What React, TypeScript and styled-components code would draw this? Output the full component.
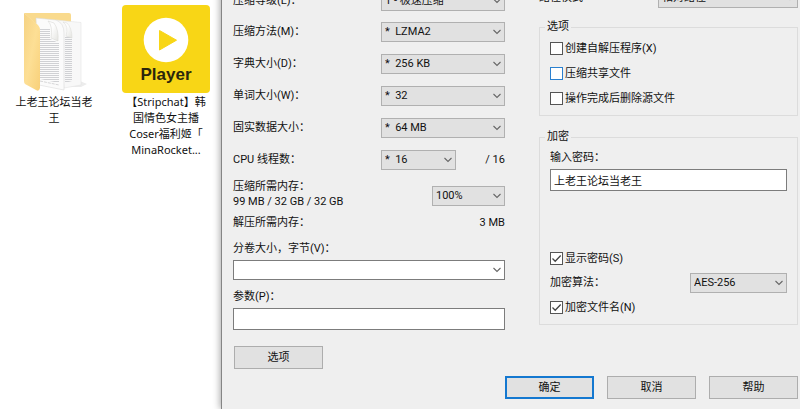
import React, { useId, useState } from "react";
import styled, { createGlobalStyle, css } from "styled-components";

const GlobalStyle = createGlobalStyle`
  *, *::before, *::after { box-sizing: border-box; }
  body {
    margin: 0;
    background: #fff;
    color: #111;
    font: 11px/16px Roboto, "Noto Sans CJK SC", sans-serif;
  }
  button, input, select { font: inherit; color: inherit; margin: 0; }
`;

const Screen = styled.div`
  display: flex;
  height: 100vh;
  overflow: hidden;
`;

const Desktop = styled.main`
  flex: none;
  display: flex;
  align-items: flex-start;
  gap: 24px;
  padding: 5px 11px 0 10px;
`;

const DesktopItem = styled.figure`
  width: 88px;
  margin: 0;
`;

const Caption = styled.figcaption`
  padding-top: 1px;
  font-family: "Noto Sans", "Noto Sans CJK SC", sans-serif;
  text-align: center;
  white-space: nowrap;
`;

const FolderArt = styled.svg`
  display: block;
  width: 88px;
  height: 88px;
`;

const PlayerTile = styled.div`
  display: flex;
  flex-direction: column;
  align-items: center;
  gap: 2px;
  height: 88px;
  padding-top: 12px;
  border-radius: 4px;
  background: #f8d616;
  color: #2b260c;
  font: bold 17px/20px "Liberation Sans", sans-serif;
`;

const Dialog = styled.form`
  flex: 1;
  align-self: flex-start;
  min-width: 0;
  min-height: calc(100vh + 14px);
  margin-top: -14px;
  padding: 0 2px 10px 11px;
  border-left: 1px solid #858585;
  background: #efefef;
  box-shadow: -1px 0 7px rgba(0, 0, 0, 0.35);
`;

const Columns = styled.div`
  display: grid;
  grid-template-columns: 21fr 20fr;
  gap: 34px;
`;

const Column = styled.div`
  display: flex;
  flex-direction: column;
  min-width: 0;
`;

const Row = styled.div<{ $height: number }>`
  display: flex;
  align-items: center;
  justify-content: space-between;
  height: ${(p) => p.$height}px;
`;

const ThreadControls = styled.div`
  display: flex;
  align-items: center;
  justify-content: space-between;
  width: 124px;
`;

const MemoryRow = styled.div`
  display: flex;
  align-items: flex-end;
  justify-content: space-between;
  padding: 3px 0 6px;
  line-height: 15px;
`;

const MemoryText = styled.div`
  display: flex;
  flex-direction: column;
`;

const MemoryControl = styled.div`
  padding-bottom: 3px;
`;

const ValueRow = styled.div`
  display: flex;
  justify-content: space-between;
`;

const BlockField = styled.div<{ $top: number }>`
  display: flex;
  flex-direction: column;
  gap: 3px;
  margin-top: ${(p) => p.$top}px;
`;

const SelectBox = styled.span<{ $width?: number }>`
  display: grid;
  align-items: center;
  width: ${(p) => (p.$width ? `${p.$width}px` : "100%")};
`;

const NativeSelect = styled.select<{ $plain?: boolean }>`
  grid-area: 1 / 1;
  appearance: none;
  width: 100%;
  height: 20px;
  padding: 0 18px 0 3px;
  border: 1px solid ${(p) => (p.$plain ? "#7c7c7c" : "#b0b0b0")};
  border-radius: 0;
  background: ${(p) => (p.$plain ? "#fff" : "#e1e1e1")};
  line-height: 16px;
`;

const Chevron = styled.svg`
  grid-area: 1 / 1;
  justify-self: end;
  width: 8px;
  height: 6px;
  margin-right: 4px;
  fill: none;
  stroke: #666;
  pointer-events: none;
`;

const TextBox = styled.input`
  width: 100%;
  height: 22px;
  padding: 0 3px;
  border: 1px solid #7c7c7c;
  border-radius: 0;
  background: #fff;
`;

const Group = styled.fieldset<{ $top: number }>`
  min-width: 0;
  margin: ${(p) => p.$top}px 0 0;
  padding: 1px 10px 4px;
  border: 1px solid #dcdcdc;
`;

const Legend = styled.legend`
  margin-left: -5px;
  padding: 0 2px;
`;

const CheckLabel = styled.label`
  display: flex;
  align-items: center;
  gap: 2px;
  height: 25px;
`;

const CheckBoxFrame = styled.span`
  display: grid;
  place-items: center;
`;

const NativeCheck = styled.input<{ $hot?: boolean }>`
  grid-area: 1 / 1;
  appearance: none;
  width: 13px;
  height: 13px;
  border: 1px solid ${(p) => (p.$hot ? "#2a80cf" : "#555")};
  background: #fff;
`;

const Tick = styled.svg`
  grid-area: 1 / 1;
  width: 11px;
  height: 11px;
  fill: none;
  stroke: #444;
  pointer-events: none;
`;

const EncryptionOptions = styled.div`
  margin-top: 55px;
`;

const PushButton = styled.button<{ $primary?: boolean }>`
  width: 89px;
  height: 23px;
  padding: 0;
  border: 1px solid #adadad;
  border-radius: 0;
  background: #e1e1e1;
  ${(p) =>
    p.$primary &&
    css`
      border: 2px solid #1478d0;
    `}
`;

const OptionsButton = styled(PushButton)`
  margin: 16px 0 0 1px;
`;

const Footer = styled.footer`
  display: flex;
  justify-content: flex-end;
  gap: 13px;
  padding-top: 7px;
`;

type DropDownProps = { id: string; value: string; width?: number; plain?: boolean };

function DropDown({ id, value, width, plain }: DropDownProps) {
  return (
    <SelectBox $width={width}>
      <NativeSelect id={id} $plain={plain} defaultValue={value}>
        <option value={value}>{value}</option>
      </NativeSelect>
      <Chevron viewBox="0 0 8 6" aria-hidden="true">
        <path d="M0.5 1 4 4.5 7.5 1" strokeWidth="1.1" />
      </Chevron>
    </SelectBox>
  );
}

type FieldProps = { label: string; value: string; width: number; height?: number };

function Field({ label, value, width, height = 32 }: FieldProps) {
  const id = useId();
  return (
    <Row $height={height}>
      <label htmlFor={id}>{label}</label>
      <DropDown id={id} value={value} width={width} />
    </Row>
  );
}

function CheckField({ label, initial = false, hot }: { label: string; initial?: boolean; hot?: boolean }) {
  const [on, setOn] = useState(initial);
  return (
    <CheckLabel>
      <CheckBoxFrame>
        <NativeCheck type="checkbox" $hot={hot} checked={on} onChange={(e) => setOn(e.target.checked)} />
        {on && (
          <Tick viewBox="0 0 11 11" aria-hidden="true">
            <path d="M1.5 5.5 4.2 8.2 9.7 2.5" strokeWidth="1.3" />
          </Tick>
        )}
      </CheckBoxFrame>
      {label}
    </CheckLabel>
  );
}

function Folder() {
  return (
    <FolderArt viewBox="0 0 88 88" aria-hidden="true">
      <defs>
        <linearGradient id="cover" x1="0" y1="0" x2="1" y2="1">
          <stop offset="0" stopColor="#f5d283" />
          <stop offset="0.5" stopColor="#fddf95" />
          <stop offset="1" stopColor="#f8d079" />
        </linearGradient>
        <linearGradient id="curl" x1="0" y1="0" x2="1" y2="1">
          <stop offset="0.4" stopColor="#fdfdfd" />
          <stop offset="1" stopColor="#e4e4e0" />
        </linearGradient>
        <pattern id="lines" width="24" height="2" patternUnits="userSpaceOnUse">
          <path d="M0 0.5H24" stroke="#d0d1d4" strokeWidth="1" />
        </pattern>
      </defs>
      <path d="M70 76 77 79 71 82H55Z" fill="#ececec" />
      <path d="M14 8H59Q61 8 61 10V18H25Z" fill="#f9da8d" />
      <path d="M46 15 71 17.5V80L54 83Z" fill="#f8f8f8" stroke="#e4e4e4" strokeWidth="0.6" />
      <path d="M55 31H62V76L55 78Z" fill="url(#lines)" />
      <path d="M53 17Q59 21 56 31L62 33Q62 23 57 18Z" fill="url(#curl)" stroke="#dadad6" strokeWidth="0.5" />
      <path d="M26 13 46 15Q54 18 54 28V85L29 80Z" fill="#fbfbfb" stroke="#dcdcdc" strokeWidth="0.6" />
      <path d="M30 23H40V34L49 38V78L30 74Z" fill="url(#lines)" />
      <path d="M30 76 49 80" stroke="#cbcccd" strokeWidth="0.8" strokeDasharray="3 1" />
      <path d="M38 16Q43 21 41 33L48 36Q49 25 44 18Z" fill="url(#curl)" stroke="#d4d4d0" strokeWidth="0.5" />
      <path d="M14 8 28 20Q30 22 30 26V83Q29 87 26 85L15 79Q14 78 14 76Z" fill="url(#cover)" />
    </FolderArt>
  );
}

export default function App() {
  const id = useId();
  return (
    <>
      <GlobalStyle />
      <Screen lang="zh-CN">
        <Desktop>
          <DesktopItem>
            <Folder />
            <Caption>
              上老王论坛当老
              <br />王
            </Caption>
          </DesktopItem>
          <DesktopItem>
            <PlayerTile>
              <svg width="46" height="46" viewBox="0 0 46 46" aria-hidden="true">
                <circle cx="23" cy="23" r="22.3" fill="#fff" />
                <path d="M16.5 13.5V33L33.5 23.2Z" fill="#f8d616" stroke="#f8d616" strokeLinejoin="round" />
              </svg>
              Player
            </PlayerTile>
            <Caption>
              【Stripchat】韩
              <br />
              国情色女主播
              <br />
              Coser福利姬「
              <br />
              MinaRocket...
            </Caption>
          </DesktopItem>
        </Desktop>

        <Dialog onSubmit={(e) => e.preventDefault()}>
          <Columns>
            <Column>
              <Field label="压缩等级(L)：" value="1 - 极速压缩" width={124} height={30} />
              <Field label="压缩方法(M)：" value={"*\u00a0\u00a0LZMA2"} width={124} />
              <Field label="字典大小(D)：" value={"*\u00a0\u00a0256 KB"} width={124} />
              <Field label="单词大小(W)：" value={"*\u00a0\u00a032"} width={124} />
              <Field label="固实数据大小：" value={"*\u00a0\u00a064 MB"} width={124} />
              <Row $height={32}>
                <label htmlFor={`${id}-cpu`}>CPU 线程数：</label>
                <ThreadControls>
                  <DropDown id={`${id}-cpu`} value={"*\u00a0\u00a016"} width={75} />
                  <span>/ 16</span>
                </ThreadControls>
              </Row>
              <MemoryRow>
                <MemoryText>
                  <label htmlFor={`${id}-mem`}>压缩所需内存：</label>
                  <span>99 MB / 32 GB / 32 GB</span>
                </MemoryText>
                <MemoryControl>
                  <DropDown id={`${id}-mem`} value="100%" width={73} />
                </MemoryControl>
              </MemoryRow>
              <ValueRow>
                <span>解压所需内存：</span>
                <span>3 MB</span>
              </ValueRow>
              <BlockField $top={10}>
                <label htmlFor={`${id}-vol`}>分卷大小，字节(V)：</label>
                <DropDown id={`${id}-vol`} value="" plain />
              </BlockField>
              <BlockField $top={9}>
                <label htmlFor={`${id}-par`}>参数(P)：</label>
                <TextBox id={`${id}-par`} type="text" />
              </BlockField>
              <OptionsButton type="button">选项</OptionsButton>
            </Column>

            <Column>
              <Field label="路径模式" value="相对路径" width={140} height={24} />
              <Group $top={9}>
                <Legend>选项</Legend>
                <CheckField label="创建自解压程序(X)" />
                <CheckField label="压缩共享文件" hot />
                <CheckField label="操作完成后删除源文件" />
              </Group>
              <Group $top={13}>
                <Legend>加密</Legend>
                <BlockField $top={4}>
                  <label htmlFor={`${id}-pwd`}>输入密码：</label>
                  <TextBox id={`${id}-pwd`} type="text" defaultValue="上老王论坛当老王" />
                </BlockField>
                <EncryptionOptions>
                  <CheckField label="显示密码(S)" initial />
                  <Field label="加密算法：" value="AES-256" width={97} height={24} />
                  <CheckField label="加密文件名(N)" initial />
                </EncryptionOptions>
              </Group>
            </Column>
          </Columns>
          <Footer>
            <PushButton type="submit" $primary>
              确定
            </PushButton>
            <PushButton type="button">取消</PushButton>
            <PushButton type="button">帮助</PushButton>
          </Footer>
        </Dialog>
      </Screen>
    </>
  );
}
